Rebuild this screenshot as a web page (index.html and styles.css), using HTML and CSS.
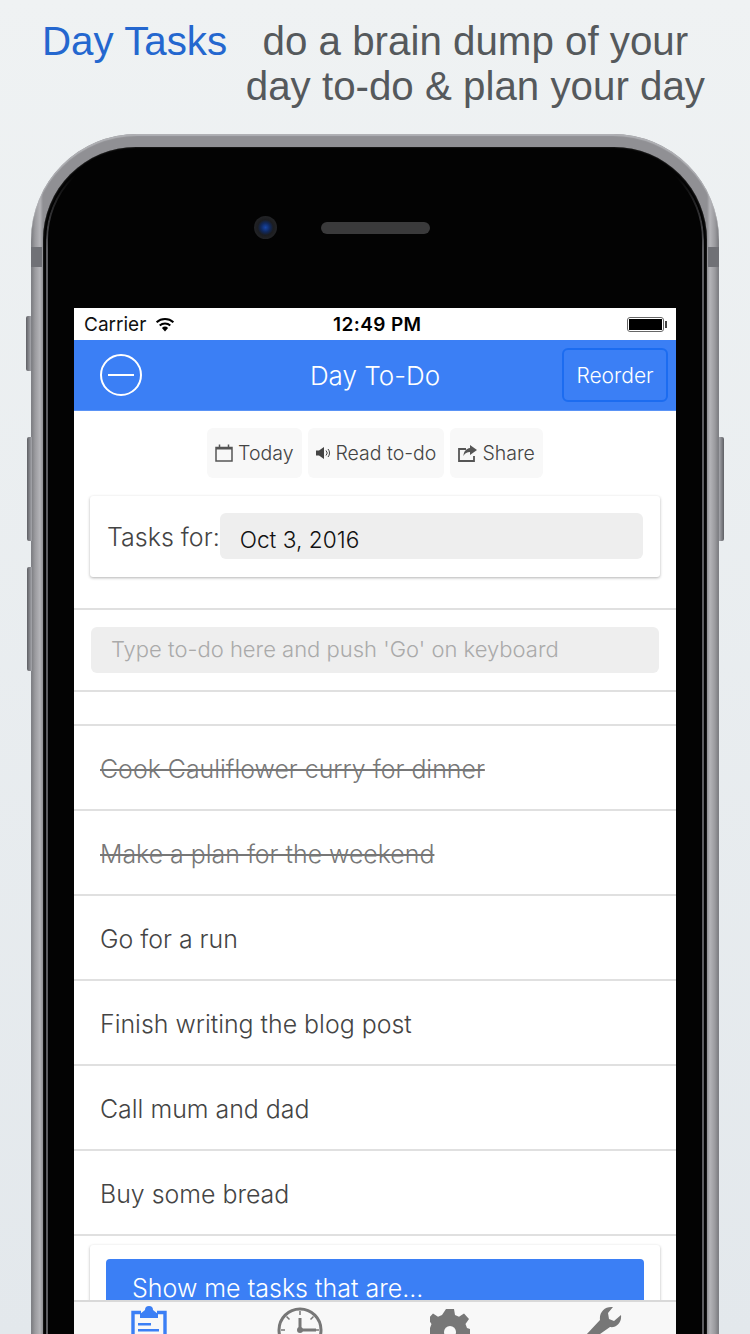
FILE: index.html
```html
<!DOCTYPE html>
<html>
  <head>
    <meta charset="utf-8">
    <link rel="stylesheet" href="styles.css">
    <title>Day Tasks</title>
  </head>
  <body>
    <header class="promo">
      <div class="promo-title">Day Tasks</div>
      <div class="promo-text">do a brain dump of your<br>day to-do &amp; plan your day</div>
    </header>

    <div class="phone">
      <span class="band band-left"></span>
      <span class="band band-right"></span>
      <span class="side-btn btn-mute"></span>
      <span class="side-btn btn-up"></span>
      <span class="side-btn btn-down"></span>
      <span class="side-btn btn-power"></span>

      <div class="phone-inner">
        <div class="phone-top">
          <div class="camera"></div>
          <div class="speaker"></div>
        </div>

        <div class="screen">
          <div class="status-bar">
            <div class="status-left">
              <span>Carrier</span>
              <svg class="wifi" width="20" height="15" viewBox="0 0 20 15">
                <path d="M10 14.6 6.9 11a4.6 4.6 0 0 1 6.2 0z" fill="#000"/>
                <path d="M4.7 8.6a7.9 7.9 0 0 1 10.6 0M1.6 5.3a12.6 12.6 0 0 1 16.8 0" fill="none" stroke="#000" stroke-width="2"/>
              </svg>
            </div>
            <div class="status-time">12:49 PM</div>
            <div class="battery"><span class="battery-fill"></span></div>
          </div>

          <nav class="nav-bar">
            <div class="menu-btn"><span></span></div>
            <div class="nav-title">Day To-Do</div>
            <div class="reorder-btn">Reorder</div>
          </nav>

          <div class="content">
            <div class="toolbar">
              <div class="tool-btn">
                <svg width="18" height="18" viewBox="0 0 18 18">
                  <path d="M1 3.5h16v13.500H1z" fill="none" stroke="#555" stroke-width="1.500"/>
                  <path d="M1 3h16v2.500H1z" fill="#555"/>
                  <path d="M4.500 .5v3M13.500 .5v3" stroke="#555" stroke-width="1.500"/>
                </svg>
                Today
              </div>
              <div class="tool-btn">
                <svg width="15" height="14" viewBox="0 0 15 14">
                  <path d="M0 4.500h3L8 1v12L3 9.500H0z" fill="#444"/>
                  <path d="M10 4.500a3.500 3.500 0 0 1 0 5M12 3a6 6 0 0 1 0 8" fill="none" stroke="#444" stroke-width="1"/>
                </svg>
                Read to-do
              </div>
              <div class="tool-btn">
                <svg width="19" height="17" viewBox="0 0 19 17">
                  <path d="M8 4H1v12h15v-5" fill="none" stroke="#555" stroke-width="1.800"/>
                  <path d="M12 0l7 5-7 5V7C9 7 7 8 5.500 11c0-4 2.500-7.500 6.500-8z" fill="#555"/>
                </svg>
                Share
              </div>
            </div>

            <div class="date-card">
              <label class="date-label">Tasks for:</label>
              <div class="date-field">Oct 3, 2016</div>
            </div>

            <div class="entry-row">
              <div class="entry-field">Type to-do here and push 'Go' on keyboard</div>
            </div>

            <ul class="task-list">
              <li class="task done">Cook Cauliflower curry for dinner</li>
              <li class="task done">Make a plan for the weekend</li>
              <li class="task">Go for a run</li>
              <li class="task">Finish writing the blog post</li>
              <li class="task">Call mum and dad</li>
              <li class="task">Buy some bread</li>
            </ul>

            <div class="filter-card">
              <div class="filter-head">Show me tasks that are...</div>
            </div>
          </div>

          <div class="tab-bar">
            <div class="tab tab-clip">
              <svg width="36" height="50" viewBox="0 0 36 50">
                <path d="M10 6.500H2v42h32v-42h-8" fill="none" stroke="#3b7ff5" stroke-width="3.400"/>
                <path d="M18 0a4 4 0 0 1 4 4l5 4v4H9V8l5-4a4 4 0 0 1 4-4z" fill="#3b7ff5"/>
                <path d="M7 17h13v2.500H7zM7 23h21v2.500H7z" fill="#3b7ff5"/>
              </svg>
            </div>
            <div class="tab">
              <svg width="46" height="50" viewBox="0 0 46 50">
                <circle cx="23" cy="23" r="21" fill="none" stroke="#777" stroke-width="3"/>
                <path d="M23 4v4M9.500 9.500l3 3M36.500 9.500l-3 3M4 23h4M42 23h-4" stroke="#777" stroke-width="1.500"/>
                <circle cx="23" cy="23" r="3" fill="#777"/>
                <path d="M23 11v12h16" fill="none" stroke="#777" stroke-width="3"/>
              </svg>
            </div>
            <div class="tab tab-gear">
              <svg width="40" height="48" viewBox="0 0 40 48">
                <path d="M16 0h8l1 6 4 1.800 5-3.400 5 5.600-3.500 5 1.500 4 3 1v8l-6 1-1.500 4 3.500 5-5 5.600-5-3.400-4 1.800-1 6h-8l-1-6-4-1.800-5 3.400-5-5.600 3.500-5-1.500-4-3-1v-8l3-1 1.500-4-3.500-5 5-5.600 5 3.400 4-1.800z" fill="#777"/>
                <circle cx="20" cy="23" r="6" fill="#f8f8f8"/>
              </svg>
            </div>
            <div class="tab tab-wrench">
              <svg width="36" height="44" viewBox="0 0 36 44">
                <path d="M27 1C19 0 13 6 14 14L0 29v15h4l10-16 10-7c6 1 12-4 11-12l-7 6-5-2-1-6z" fill="#777"/>
              </svg>
            </div>
          </div>
        </div>
      </div>
    </div>
  </body>
</html>
```

FILE: styles.css
```css
* {
  box-sizing: border-box;
}

html, body {
  margin: 0;
  height: 1334px;
  overflow: hidden;
}

body {
  width: 750px;
  background: linear-gradient(#eff2f3, #e3e8ec);
  font-family: Inter, "Liberation Sans", sans-serif;
}

/* promo heading */
.promo {
  height: 134px;
  padding: 19px 45px 0 42px;
  display: flex;
  justify-content: space-between;
  font-family: "Liberation Sans", Arial, sans-serif;
  font-size: 40.3px;
  line-height: 45px;
  color: #55595c;
}

.promo-title {
  color: #2467cf;
}

.promo-text {
  text-align: center;
}

/* phone body */
.phone {
  position: relative;
  width: 688px;
  height: 1400px;
  margin-left: 31px;
  padding: 13px 12px 0;
  border-radius: 106px;
  background: linear-gradient(90deg, #77787c 0, #9a9a9e 4px, #b4b4b8 9px, #909094 12px, #909094 676px, #b4b4b8 679px, #9a9a9e 684px, #77787c 688px);
  box-shadow: inset 0 2px 1px #b0b1b5;
}

.band {
  position: absolute;
  top: 113px;
  width: 11px;
  height: 20px;
  background: #707176;
}

.band-left {
  left: 0;
}

.band-right {
  right: 0;
}

.side-btn {
  position: absolute;
  width: 5px;
  background: linear-gradient(90deg, #5f6065, #a5a6ab);
  border-radius: 2px 0 0 2px;
}

.btn-mute {
  left: -5px;
  top: 182px;
  height: 55px;
}

.btn-up {
  left: -4px;
  top: 303px;
  height: 104px;
}

.btn-down {
  left: -4px;
  top: 433px;
  height: 104px;
}

.btn-power {
  right: -5px;
  top: 303px;
  height: 104px;
  transform: scaleX(-1);
}

.phone-inner {
  position: relative;
  height: 100%;
  padding: 0 31px;
  border-radius: 93px;
  background: #030303;
  box-shadow: inset 0 0 2px #444;
}

.phone-inner::before {
  content: "";
  position: absolute;
  inset: 3px;
  border: 2px solid #5c5c60;
  border-radius: 90px;
  -webkit-mask-image: linear-gradient(transparent 25px, #000 100px);
  mask-image: linear-gradient(transparent 25px, #000 100px);
}

.phone-top {
  height: 161px;
  display: flex;
  justify-content: center;
  align-items: center;
  gap: 44px;
  padding-right: 66px;
  position: relative;
}

.camera {
  width: 23px;
  height: 23px;
  border-radius: 50%;
  background: radial-gradient(circle, #1746a8 0, #10285c 28%, #1c1d20 48%, #2a2b2e 100%);
}

.speaker {
  width: 109px;
  height: 12px;
  border-radius: 6px;
  background: #3a3a3b;
}

/* app screen */
.screen {
  position: relative;
  width: 602px;
  height: 1090px;
  background: #fff;
  display: flex;
  flex-direction: column;
}

.status-bar {
  height: 32px;
  padding: 0 9px 0 10px;
  display: flex;
  align-items: center;
  justify-content: space-between;
  font-size: 19px;
  color: #111;
  position: relative;
}

.status-left {
  display: flex;
  align-items: center;
  gap: 9px;
}

.status-time {
  position: absolute;
  left: 259px;
  font-weight: 600;
  letter-spacing: 0.4px;
  color: #000;
}

.battery {
  position: relative;
  width: 37px;
  height: 15px;
  margin-right: 3px;
  padding: 1px;
  border: 1px solid #666;
  border-radius: 3px;
}

.battery::after {
  content: "";
  position: absolute;
  right: -4px;
  top: 3px;
  width: 2px;
  height: 7px;
  background: #444;
}

.battery-fill {
  display: block;
  height: 100%;
  background: #000;
}

.nav-bar {
  height: 71px;
  padding: 0 8px 0 26px;
  display: flex;
  align-items: center;
  justify-content: space-between;
  position: relative;
  background: #3b7ff5;
  border-bottom: 1px solid #5a93f6;
  color: #fff;
}

.menu-btn {
  width: 42px;
  height: 42px;
  border: 2px solid #fff;
  border-radius: 50%;
  display: flex;
  align-items: center;
  justify-content: center;
}

.menu-btn span {
  width: 26px;
  height: 2px;
  background: #fff;
}

.nav-title {
  font-size: 26px;
  font-weight: 300;
  position: absolute;
  left: 0;
  right: 0;
  text-align: center;
}

.reorder-btn {
  position: relative;
  width: 106px;
  height: 54px;
  border: 2px solid #1c6cf0;
  border-radius: 6px;
  display: flex;
  align-items: center;
  justify-content: center;
  font-size: 21px;
  font-weight: 300;
}

.content {
  flex: 1;
  min-height: 0;
  overflow: hidden;
}

.toolbar {
  display: flex;
  justify-content: center;
  gap: 6px;
  padding-top: 17px;
}

.tool-btn {
  height: 50px;
  padding: 0 8px;
  display: flex;
  align-items: center;
  gap: 5px;
  border-radius: 6px;
  background: #f8f8f8;
  color: #444;
  font-size: 19.5px;
  font-weight: 300;
}

.date-card {
  height: 81px;
  margin: 18px 16px 0;
  padding: 17px 17px 18px 17px;
  display: flex;
  align-items: center;
  border-radius: 3px;
  box-shadow: 0 1px 3px rgba(0, 0, 0, 0.3);
}

.date-label {
  padding-top: 2px;
  font-size: 25px;
  font-weight: 300;
  color: #444;
}

.date-field {
  flex: 1;
  height: 46px;
  padding: 13px 20px 0;
  border-radius: 6px;
  background: #eee;
  font-size: 22.7px;
  font-weight: 300;
  color: #111;
}

.entry-row {
  margin-top: 31px;
  padding: 17px;
  border-top: 2px solid #e0e0e0;
  border-bottom: 2px solid #e0e0e0;
}

.entry-field {
  height: 46px;
  padding: 0 20px 2px;
  display: flex;
  align-items: center;
  border-radius: 6px;
  background: #eee;
  color: #aaa;
  font-size: 22px;
  font-weight: 300;
}

.task-list {
  list-style: none;
  margin: 32px 0 0;
  padding: 0;
  border-top: 2px solid #e0e0e0;
}

.task {
  height: 85px;
  padding: 2px 26px 0;
  display: flex;
  align-items: center;
  border-bottom: 2px solid #e0e0e0;
  color: #444;
  font-size: 24.9px;
  font-weight: 300;
}

.done {
  color: #777;
  text-decoration: line-through;
}

.filter-card {
  margin: 9px 16px 0;
  padding: 14px 16px 0;
  height: 120px;
  border-radius: 3px;
  box-shadow: 0 1px 3px rgba(0, 0, 0, 0.3);
}

.filter-head {
  height: 80px;
  padding: 14px 26px;
  border-radius: 4px;
  background: #3b7ff5;
  color: #fff;
  font-size: 25px;
  font-weight: 300;
}

.tab-bar {
  height: 98px;
  display: grid;
  grid-template-columns: repeat(4, 1fr);
  border-top: 2px solid #d9d9d9;
  background: #f8f8f8;
}

.tab {
  display: flex;
  justify-content: center;
  padding-top: 5px;
}

.tab-clip {
  padding-top: 4px;
}

.tab-gear {
  padding-top: 7px;
}

.tab-wrench {
  padding-top: 4px;
  padding-left: 6px;
}
```
